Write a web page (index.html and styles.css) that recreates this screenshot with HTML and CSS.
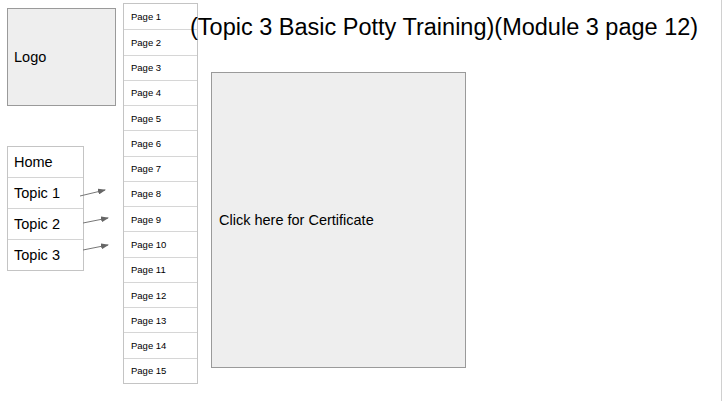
FILE: index.html
```html
<!DOCTYPE html>
<html>
<head>
<meta charset="utf-8">
<link rel="stylesheet" href="styles.css">
</head>
<body>
<div class="frame">
  <div class="left">
    <div class="logo">Logo</div>
    <div class="nav">
      <div class="nav-item">Home</div>
      <div class="nav-item">Topic 1</div>
      <div class="nav-item">Topic 2</div>
      <div class="nav-item">Topic 3</div>
    </div>
    <svg class="arrows" width="40" height="80" viewBox="0 0 40 80">
      <defs>
        <marker id="ah" markerWidth="8" markerHeight="6" refX="7" refY="3" orient="auto" markerUnits="userSpaceOnUse">
          <path d="M0,0 L8,3 L0,6 Z" fill="#666"/>
        </marker>
      </defs>
      <line x1="2" y1="11" x2="27" y2="5" stroke="#777" stroke-width="1" marker-end="url(#ah)"/>
      <line x1="5" y1="38" x2="30" y2="33" stroke="#777" stroke-width="1" marker-end="url(#ah)"/>
      <line x1="5" y1="65" x2="30" y2="60" stroke="#777" stroke-width="1" marker-end="url(#ah)"/>
    </svg>
  </div>
  <div class="pages">
    <div class="page">Page 1</div>
    <div class="page">Page 2</div>
    <div class="page">Page 3</div>
    <div class="page">Page 4</div>
    <div class="page">Page 5</div>
    <div class="page">Page 6</div>
    <div class="page">Page 7</div>
    <div class="page">Page 8</div>
    <div class="page">Page 9</div>
    <div class="page">Page 10</div>
    <div class="page">Page 11</div>
    <div class="page">Page 12</div>
    <div class="page">Page 13</div>
    <div class="page">Page 14</div>
    <div class="page">Page 15</div>
  </div>
  <div class="main">
    <h1 class="title">(Topic 3 Basic Potty Training)(Module 3 page 12)</h1>
    <div class="cert">Click here for Certificate</div>
  </div>
</div>
</body>
</html>
```

FILE: styles.css
```css
html, body {
  margin: 0;
  padding: 0;
  background: #ffffff;
}
body {
  font-family: "Liberation Sans", Arial, sans-serif;
  color: #000;
}
.frame {
  width: 721px;
  height: 401px;
  border-right: 1px solid #d0d0d0;
  display: flex;
  align-items: flex-start;
}
.left {
  position: relative;
  width: 116px;
  padding-left: 7px;
  padding-top: 8px;
  flex: none;
}
.logo {
  width: 101px;
  height: 96px;
  border: 1px solid #9a9a9a;
  background: #eeeeee;
  display: flex;
  align-items: center;
  padding-left: 6px;
  font-size: 14.5px;
  margin-bottom: 40px;
}
.nav {
  width: 75px;
  border: 1px solid #c4c4c4;
}
.nav-item {
  height: 30px;
  display: flex;
  align-items: center;
  padding-left: 6px;
  font-size: 14.5px;
  border-top: 1px solid #d4d4d4;
}
.nav-item:first-child {
  border-top: none;
}
.arrows {
  position: absolute;
  left: 78px;
  top: 185px;
}
.pages {
  flex: none;
  margin-top: 3px;
  width: 73px;
  border: 1px solid #c4c4c4;
  display: grid;
  grid-template-rows: repeat(15, 1fr);
  height: 379px;
}
.page {
  display: flex;
  align-items: center;
  padding-left: 7px;
  font-size: 9.5px;
  border-top: 1px solid #d6d6d6;
}
.page:first-child {
  border-top: none;
}
.main {
  flex: 1;
  padding-top: 13px;
}
.title {
  margin: 0 0 0 -8px;
  font-weight: normal;
  font-size: 23.5px;
  line-height: 28px;
  white-space: nowrap;
}
.cert {
  margin-top: 31px;
  margin-left: 13px;
  width: 246px;
  height: 294px;
  border: 1px solid #9a9a9a;
  background: #eeeeee;
  display: flex;
  align-items: center;
  padding-left: 7px;
  font-size: 14.5px;
}
```
